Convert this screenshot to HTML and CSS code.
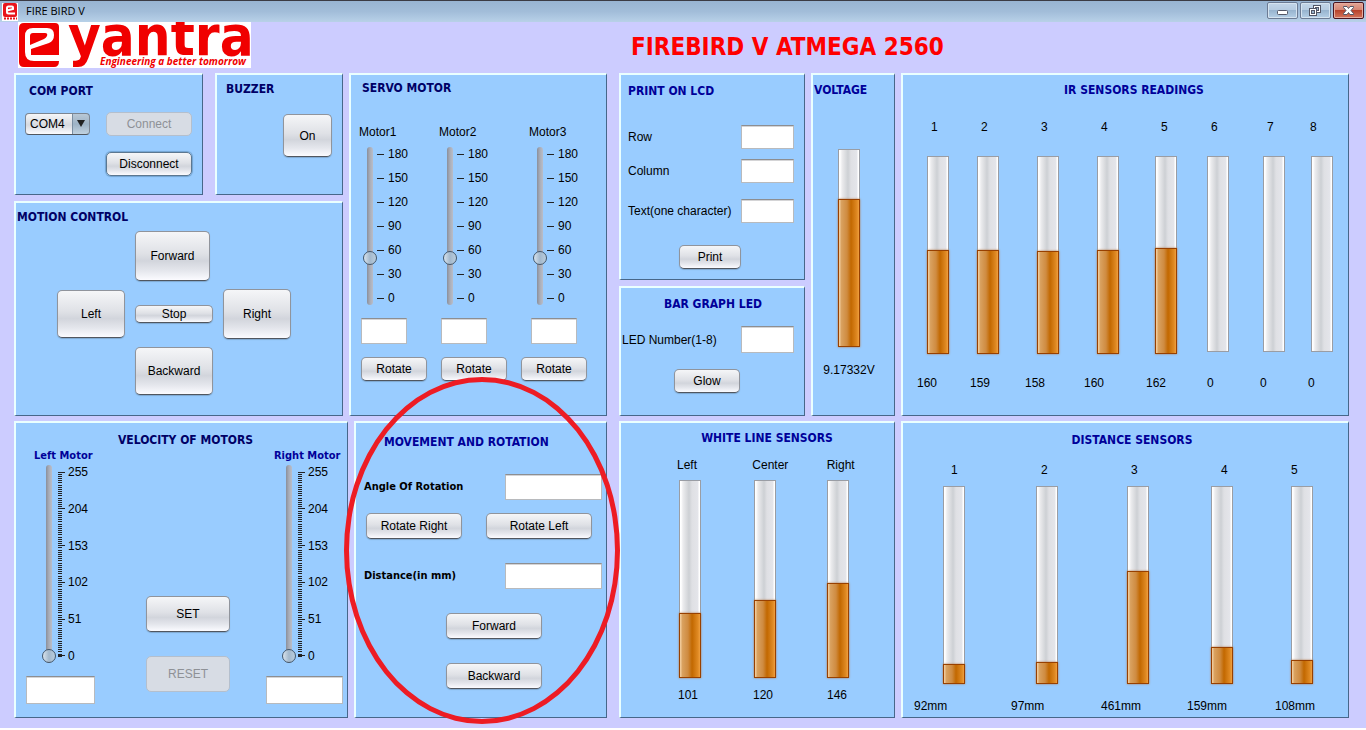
FILE: index.html
```html
<!DOCTYPE html>
<html lang="en">
<head>
<meta charset="utf-8">
<title>FIRE BIRD V</title>
<link rel="stylesheet" href="styles.css">
</head>
<body>
<div class="window">
  <div class="titlebar">
    <svg class="app-icon" width="16" height="18" viewBox="0 0 16 18" aria-hidden="true">
      <rect width="16" height="18" fill="#fff"/>
      <rect x="1" y="0" width="14" height="14" rx="2" fill="#e8141c"/>
      <path d="M5 7.500L11 6V4.500Q11 3.500 10 3.500H6.500Q5 3.500 5 5V9Q5 10.500 6.500 10.500H13" fill="none" stroke="#fff" stroke-width="2"/>
      <path d="M2 15.500H15" stroke="#e8141c" stroke-width="2" stroke-dasharray="2 1"/>
    </svg>
    <span class="titlebar-text">FIRE BIRD V</span>
    <div class="window-buttons">
      <button class="win-btn" type="button" aria-label="Minimize">
        <svg width="29" height="15" viewBox="0 0 29 15"><rect x="9.500" y="7.500" width="10" height="4" rx="1" fill="#fff" stroke="#535666"/></svg>
      </button>
      <button class="win-btn" type="button" aria-label="Restore">
        <svg width="29" height="15" viewBox="0 0 29 15"><rect x="12.500" y="2.500" width="7" height="7" fill="#fff" stroke="#535666"/><rect x="14.500" y="4.500" width="3" height="3" fill="#9ab4cc" stroke="#535666"/><rect x="8.500" y="5.500" width="7" height="7" fill="#fff" stroke="#535666"/><rect x="10.500" y="7.500" width="3" height="3" fill="#9ab4cc" stroke="#535666"/></svg>
      </button>
      <button class="win-btn win-close" type="button" aria-label="Close">
        <svg width="29" height="15" viewBox="0 0 29 15"><path d="M9.500 3.500H13L14.500 5.500L16 3.500H19.500V4.500L17 7.500L19.500 10.500V11.500H16L14.500 9.500L13 11.500H9.500V10.500L12 7.500L9.500 4.500Z" fill="#fff" stroke="#535666"/></svg>
      </button>
    </div>
  </div>

  <header class="header">
    <svg class="logo" width="233" height="46" viewBox="0 0 233 46" role="img" aria-label="e-yantra, Engineering a better tomorrow">
      <rect width="233" height="46" fill="#fff"/>
      <path d="M6 1H37Q41 1 41 5V33H13V27L31 21Q36 19 36 13Q36 6 29 6H15Q7 6 7 14V30Q7 39 16 39H41Q41 45 36 45H6Q1 45 1 40V6Q1 1 6 1Z" fill="#f00000"/>
      <path d="M15 11H27Q30 11 29 14Q28 16 26 17L12 23V14Q12 11 15 11Z" fill="#f00000"/>
      <text class="logo-word" x="50" y="33">yantra</text>
      <text class="logo-tag" x="82" y="43">Engineering a better tomorrow</text>
    </svg>
    <h1 class="title">FIREBIRD V ATMEGA 2560</h1>
  </header>

  <main class="board">
    <div class="side">
      <div class="row row-top side-top">
        <div class="col">
          <div class="row row-ports">
            <section class="panel com">
              <h2 class="dark">COM PORT</h2>
              <div class="com-grid">
                <div class="combo">
                  <select aria-label="COM port"><option>COM4</option></select>
                  <svg width="8" height="7" viewBox="0 0 8 7" aria-hidden="true"><path d="M0 0H8L4 7Z" fill="#222"/></svg>
                </div>
                <button class="btn" type="button" disabled>Connect</button>
                <button class="btn focused" type="button">Disconnect</button>
              </div>
            </section>
            <section class="panel buzzer">
              <h2 class="dark">BUZZER</h2>
              <button class="btn" type="button">On</button>
            </section>
          </div>
          <section class="panel motion">
            <h2 class="dark">MOTION CONTROL</h2>
            <div class="pad">
              <button class="btn fwd" type="button">Forward</button>
              <button class="btn left" type="button">Left</button>
              <button class="btn stop" type="button">Stop</button>
              <button class="btn right" type="button">Right</button>
              <button class="btn back" type="button">Backward</button>
            </div>
          </section>
        </div>
        <section class="panel servo">
          <h2 class="dark">SERVO MOTOR</h2>
          <div class="servo-grid">
            <div class="servo-col">
              <label for="m1">Motor1</label>
              <div class="slider"><input id="m1" type="range" min="0" max="180" value="50"><ul class="scale"><li>180</li><li>150</li><li>120</li><li>90</li><li>60</li><li>30</li><li>0</li></ul></div>
              <input class="field" type="text" aria-label="Motor1 angle">
            </div>
            <div class="servo-col">
              <label for="m2">Motor2</label>
              <div class="slider"><input id="m2" type="range" min="0" max="180" value="50"><ul class="scale"><li>180</li><li>150</li><li>120</li><li>90</li><li>60</li><li>30</li><li>0</li></ul></div>
              <input class="field" type="text" aria-label="Motor2 angle">
            </div>
            <div class="servo-col">
              <label for="m3">Motor3</label>
              <div class="slider"><input id="m3" type="range" min="0" max="180" value="50"><ul class="scale"><li>180</li><li>150</li><li>120</li><li>90</li><li>60</li><li>30</li><li>0</li></ul></div>
              <input class="field" type="text" aria-label="Motor3 angle">
            </div>
          </div>
          <div class="servo-buttons">
            <button class="btn" type="button">Rotate</button>
            <button class="btn" type="button">Rotate</button>
            <button class="btn" type="button">Rotate</button>
          </div>
        </section>
      </div>

      <div class="row row-bottom side-bottom">
        <section class="panel velocity">
          <h2 class="dark">VELOCITY OF MOTORS</h2>
          <div class="velocity-grid">
            <div class="velocity-col">
              <label for="vl">Left Motor</label>
              <div class="slider tall"><input id="vl" type="range" min="0" max="255" value="0"><svg class="ticks" width="4" height="185" viewBox="0 0 4 185" aria-hidden="true"><path d="M2 0V185" stroke="#222" stroke-width="4" stroke-dasharray="1 1 1 1 1 1 1 1 1 1 1 2"/></svg><ul class="scale"><li>255</li><li>204</li><li>153</li><li>102</li><li>51</li><li>0</li></ul></div>
              <input class="field" type="text" aria-label="Left motor velocity">
            </div>
            <div class="velocity-actions">
              <button class="btn" type="button">SET</button>
              <button class="btn" type="button" disabled>RESET</button>
            </div>
            <div class="velocity-col">
              <label for="vr">Right Motor</label>
              <div class="slider tall"><input id="vr" type="range" min="0" max="255" value="0"><svg class="ticks" width="4" height="185" viewBox="0 0 4 185" aria-hidden="true"><path d="M2 0V185" stroke="#222" stroke-width="4" stroke-dasharray="1 1 1 1 1 1 1 1 1 1 1 2"/></svg><ul class="scale"><li>255</li><li>204</li><li>153</li><li>102</li><li>51</li><li>0</li></ul></div>
              <input class="field wide" type="text" aria-label="Right motor velocity">
            </div>
          </div>
        </section>
        <section class="panel movement">
          <h2>MOVEMENT AND ROTATION</h2>
          <div class="line"><label for="angle">Angle Of Rotation</label><input class="field" id="angle" type="text"></div>
          <div class="turns"><button class="btn" type="button">Rotate Right</button><button class="btn turn-left" type="button">Rotate Left</button></div>
          <div class="line"><label for="dist">Distance(in mm)</label><input class="field" id="dist" type="text"></div>
          <div class="drive"><button class="btn" type="button">Forward</button><button class="btn" type="button">Backward</button></div>
          <div class="highlight"></div>
        </section>
      </div>
    </div>

    <div class="middle">
      <div class="row row-top middle-top">
        <div class="col">
          <section class="panel lcd">
            <h2>PRINT ON LCD</h2>
            <div class="line"><label for="lrow">Row</label><input class="field" id="lrow" type="text"></div>
            <div class="line"><label for="lcol">Column</label><input class="field" id="lcol" type="text"></div>
            <div class="line"><label for="ltext">Text(one character)</label><input class="field" id="ltext" type="text"></div>
            <button class="btn" type="button">Print</button>
          </section>
          <section class="panel led">
            <h2>BAR GRAPH LED</h2>
            <div class="line"><label for="led">LED Number(1-8)</label><input class="field" id="led" type="text"></div>
            <button class="btn" type="button">Glow</button>
          </section>
        </div>
        <section class="panel voltage">
          <h2>VOLTAGE</h2>
          <div class="voltage-body">
            <div class="bar"><div class="fill" style="height:76.3%"></div></div>
            <span>9.17332V</span>
          </div>
        </section>
      </div>
      <section class="panel white row-bottom">
        <h2>WHITE LINE SENSORS</h2>
        <div class="names"><span>Left</span><span>Center</span><span>Right</span></div>
        <div class="bars">
          <div class="bar"><div class="fill" style="height:33.5%"></div></div>
          <div class="bar"><div class="fill" style="height:40.2%"></div></div>
          <div class="bar"><div class="fill" style="height:49%"></div></div>
        </div>
        <div class="values"><span>101</span><span>120</span><span>146</span></div>
      </section>
    </div>

    <div class="sensors">
      <section class="panel ir row-top">
        <h2>IR SENSORS READINGS</h2>
        <div class="names"><span>1</span><span>2</span><span>3</span><span>4</span><span>5</span><span>6</span><span>7</span><span>8</span></div>
        <div class="bars">
          <div class="bar"><div class="fill" style="height:53.6%"></div></div>
          <div class="bar"><div class="fill" style="height:53.6%"></div></div>
          <div class="bar"><div class="fill" style="height:53.1%"></div></div>
          <div class="bar"><div class="fill" style="height:53.6%"></div></div>
          <div class="bar"><div class="fill" style="height:54.6%"></div></div>
          <div class="bar"></div>
          <div class="bar"></div>
          <div class="bar"></div>
        </div>
        <div class="values"><span>160</span><span>159</span><span>158</span><span>160</span><span>162</span><span>0</span><span>0</span><span>0</span></div>
      </section>
      <section class="panel distance row-bottom">
        <h2>DISTANCE SENSORS</h2>
        <div class="names"><span>1</span><span>2</span><span>3</span><span>4</span><span>5</span></div>
        <div class="bars">
          <div class="bar"><div class="fill" style="height:10.3%"></div></div>
          <div class="bar"><div class="fill" style="height:11.3%"></div></div>
          <div class="bar"><div class="fill" style="height:58.2%"></div></div>
          <div class="bar"><div class="fill" style="height:19.1%"></div></div>
          <div class="bar"><div class="fill" style="height:12.4%"></div></div>
        </div>
        <div class="values"><span>92mm</span><span>97mm</span><span>461mm</span><span>159mm</span><span>108mm</span></div>
      </section>
    </div>
  </main>
</div>
</body>
</html>
```

FILE: styles.css
```css
* { box-sizing: border-box; }

body {
  margin: 0;
  background: #fff;
  color: #000;
  font: 12px/16px "Liberation Sans", Arial, sans-serif;
}

.window {
  background: #ccccff;
  padding-bottom: 10px;
}

/* Title bar */
.titlebar {
  display: flex;
  align-items: center;
  height: 22px;
  padding: 0 2px;
  border-top: 1px solid #3b3b44;
  background: linear-gradient(#98b4d2, #a2bdd9 50%, #b8d1e8);
}
.app-icon { flex: none; }
.titlebar-text {
  margin-left: 8px;
  padding-bottom: 2px;
  font: 11px/16px "Open Sans", sans-serif;
}
.window-buttons {
  display: flex;
  gap: 2px;
  margin-left: auto;
  align-self: flex-start;
  padding-top: 1px;
}
.win-btn {
  width: 31px;
  height: 17px;
  padding: 0;
  border: 1px solid #6c7b94;
  border-radius: 2px;
  background: linear-gradient(#c3d5e8, #b4cae0 50%, #98b4cf 50%, #b5cfe6);
  box-shadow: inset 0 0 0 1px #d5e3f0;
}
.win-btn svg { display: block; }
.win-close {
  border-color: #4a1420;
  background: linear-gradient(#e3a596, #d68674 45%, #b8432c 50%, #d3755c);
  box-shadow: inset 0 0 0 1px #e5ac9f;
}

/* Header */
.header {
  display: grid;
  grid-template-columns: 613fr 735fr;
  height: 51px;
  padding-left: 18px;
}
.logo { display: block; }
.logo-word {
  fill: #f00000;
  font: bold 56px "DejaVu Sans Condensed", "DejaVu Sans", sans-serif;
}
.logo-tag {
  fill: #f00000;
  font: italic bold 10px "Open Sans", sans-serif;
}
.title {
  margin: 0;
  padding-top: 9px;
  color: #ff0000;
  font: bold 24px/32px "DejaVu Sans Condensed", Tahoma, sans-serif;
  white-space: nowrap;
}

/* Board */
.board {
  display: flex;
  padding: 0 17px 0 14px;
}
.side, .middle, .sensors, .col {
  display: flex;
  flex-direction: column;
  min-width: 0;
}
.side { flex: 593 1 0; gap: 5px; margin-right: 12px; }
.middle { flex: 276 1 0; gap: 5px; margin-right: 6px; }
.sensors { flex: 448 1 0; gap: 5px; }
.row { display: grid; gap: 6px; }
.row-top { min-height: 343px; }
.row-bottom { min-height: 297px; }
.side-top { grid-template-columns: 329fr 258fr; }
.side-bottom { grid-template-columns: 334fr 253fr; }
.middle-top { grid-template-columns: 186fr 84fr; }
.row-ports { grid-template-columns: 189fr 128fr; gap: 12px; min-height: 122px; }
.col { gap: 6px; }

.panel {
  position: relative;
  min-width: 0;
  background: #99ccff;
  border: solid;
  border-width: 2px 1px 1px 2px;
  border-color: #eaffff #47678a #47678a #eaffff;
}
h2 {
  margin: 0;
  color: #000099;
  font: bold 12px/16px "DejaVu Sans Condensed", Tahoma, sans-serif;
  white-space: nowrap;
}
h2.dark { color: #000066; }

/* Controls */
.btn {
  height: 24px;
  padding: 0;
  border: 1px solid #90949c;
  border-bottom-color: #50565f;
  border-radius: 5px;
  background: linear-gradient(#f5f6f8, #dfe1e6 45%, #d2d5dc 60%, #e4e6ec 80%, #fbfbff);
  box-shadow: 0 1px 1px #7fa8d0;
  color: #000;
  font: 12px/16px "Liberation Sans", Arial, sans-serif;
}
.btn:disabled {
  border-color: #b4bfcd;
  background: #d7dce4;
  box-shadow: none;
  color: #8e9196;
}
.btn.focused {
  border-color: #5c7790;
  box-shadow: 0 0 1px 1px #73a4d1;
}
.field {
  width: 53px;
  height: 24px;
  padding: 0 4px;
  border: 1px solid #b8babd;
  border-top-color: #8d8e91;
  border-radius: 0;
  background: #fff;
  box-shadow: inset 0 1px 0 #d4d4d6;
  font: 12px/16px "Liberation Sans", Arial, sans-serif;
}
.line {
  display: flex;
  align-items: center;
  justify-content: space-between;
}

/* COM port */
.com { padding: 8px 0 0 9px; }
.com h2 { padding-left: 4px; }
.com-grid {
  display: grid;
  grid-template-columns: 65px 86px;
  gap: 16px;
  align-items: center;
  margin-top: 13px;
}
.com-grid .focused { grid-column: 2; }
.combo { position: relative; }
.combo select {
  display: block;
  width: 100%;
  height: 22px;
  padding: 0 4px;
  appearance: none;
  border: 1px solid #7b8592;
  border-bottom-color: #50565f;
  border-radius: 4px;
  background:
    linear-gradient(#7a8ea2, #7a8ea2) right 16px top / 1px 100% no-repeat,
    linear-gradient(#b9c8d6, #9db2c5 50%, #c1d2e0) right top / 16px 100% no-repeat,
    linear-gradient(#f5f6f8, #d6d9df 55%, #fbfbff);
  color: #000;
  font: 12px/16px "Liberation Sans", Arial, sans-serif;
}
.combo svg { position: absolute; right: 5px; top: 7px; pointer-events: none; }

/* Buzzer */
.buzzer {
  display: flex;
  flex-direction: column;
  padding: 6px 10px 0 9px;
}
.buzzer .btn { align-self: flex-end; width: 49px; height: 43px; margin-top: 17px; }

/* Motion control */
.motion { flex: 1; padding: 6px 0 0 1px; }
.pad {
  display: grid;
  grid-template-columns: 68px 78px 68px;
  grid-template-areas: ". fwd ." "left stop right" ". back .";
  gap: 8px 10px;
  align-items: center;
  margin: 6px 0 0 40px;
}
.pad .btn { height: 50px; }
.pad .fwd { grid-area: fwd; width: 75px; }
.pad .left { grid-area: left; height: 48px; }
.pad .stop { grid-area: stop; height: 18px; }
.pad .right { grid-area: right; }
.pad .back { grid-area: back; height: 48px; }

/* Sliders */
.slider { display: flex; align-items: center; height: 160px; }
.slider.tall { height: 200px; }
.slider input {
  flex: none;
  width: 14px;
  height: 158px;
  margin: 0;
  appearance: none;
  background: transparent;
  writing-mode: vertical-lr;
  direction: rtl;
}
.slider.tall input { height: 198px; }
.slider input::-webkit-slider-runnable-track {
  width: 6px;
  height: 100%;
  border-radius: 3px;
  background: linear-gradient(to right, #8b8f9b, #a9adb8 50%, #b9bdc9);
}
.slider input::-webkit-slider-thumb {
  appearance: none;
  width: 14px;
  height: 14px;
  margin-left: -4px;
  border: 1px solid #42566b;
  border-radius: 50%;
  background: linear-gradient(to right, #d9e3ec, #a3b8cc 50%, #b9cddd);
}
.scale {
  display: flex;
  flex-direction: column;
  justify-content: space-between;
  height: 100%;
  margin: 0;
  padding: 0;
  list-style: none;
}
.scale li { display: flex; align-items: center; gap: 4px; }
.scale li::before { content: ""; width: 7px; height: 1px; background: #222; }
.tall .scale { margin-left: -4px; }
.tall .scale li { gap: 3px; }
.ticks { flex: none; margin-left: 2px; }

/* Servo */
.servo { padding-top: 5px; }
.servo h2 { padding-left: 11px; }
.servo-grid {
  display: grid;
  grid-template-columns: 80fr 90fr 77fr;
  margin-top: 28px;
  padding-left: 8px;
}
.servo-col { display: flex; flex-direction: column; }
.servo-col .slider { margin: 6px 0 0 4px; }
.servo-col .field { width: 46px; height: 26px; margin: 12px 0 0 2px; }
.servo-buttons {
  display: grid;
  grid-template-columns: 80fr 80fr 85fr;
  margin-top: 13px;
  padding-left: 10px;
}
.servo-buttons .btn { width: 66px; }

/* Velocity */
.velocity { padding-top: 9px; }
.velocity h2 { padding-left: 8px; text-align: center; }
.velocity-grid {
  display: grid;
  grid-template-columns: 120fr 120fr 81fr;
  padding-left: 10px;
}
.velocity-col { display: flex; flex-direction: column; }
.velocity-col label {
  padding-left: 8px;
  color: #000099;
  font: bold 11px/16px "DejaVu Sans Condensed", Tahoma, sans-serif;
  white-space: nowrap;
}
.velocity-col .slider { margin-left: 16px; }
.velocity-col .field { width: 69px; height: 28px; margin-top: 12px; }
.velocity-col .wide { width: 77px; }
.velocity-actions {
  display: flex;
  flex-direction: column;
  justify-content: flex-end;
  gap: 24px;
  padding-bottom: 12px;
}
.velocity-actions .btn { width: 84px; height: 36px; }

/* Movement */
.movement { padding: 11px 4px 0 8px; }
.movement h2 { padding-left: 20px; }
.movement .line { margin-top: 24px; }
.movement label { font: bold 11px/16px "DejaVu Sans Condensed", Tahoma, sans-serif; }
.movement .field { width: 97px; height: 26px; }
.movement .btn { width: 96px; height: 26px; }
.turns { display: flex; gap: 24px; margin-top: 13px; padding-left: 2px; }
.movement .turn-left { width: 106px; }
.drive {
  display: flex;
  flex-direction: column;
  gap: 24px;
  margin-top: 24px;
  padding-left: 82px;
}
.highlight {
  position: absolute;
  inset: -46px -14px -7px -12px;
  z-index: 2;
  border: 5px solid #ed1c24;
  border-radius: 50%;
  pointer-events: none;
}

/* LCD and LED */
.lcd, .led { display: flex; flex-direction: column; }
.lcd { min-height: 207px; padding: 8px 10px 0 7px; }
.lcd .line { margin-top: 10px; }
.lcd h2 + .line { margin-top: 26px; }
.lcd .line:nth-of-type(3) { margin-top: 16px; }
.lcd .btn { width: 62px; margin: 22px 0 0 51px; }
.led { flex: 1; padding: 8px 10px 0 1px; }
.led h2 { padding-left: 10px; text-align: center; }
.led .line { margin-top: 14px; }
.led .field { height: 27px; }
.led .btn { width: 66px; margin: 16px 0 0 52px; }

/* Level bars */
.bar {
  position: relative;
  width: 22px;
  height: 196px;
  border: 1px solid #9a9da4;
  background: linear-gradient(to right, #fff 0 1px, #ececee 3px, #cdd0d4 45%, #dfe0e4 60%, #e4e5ea 90%, #fff 95%);
}
.fill {
  position: absolute;
  right: -1px;
  bottom: -3px;
  left: -1px;
  border: 1px solid #984000;
  background: linear-gradient(to right, #f0c896 0 1px, #daa362 2px, #cf8b40 40%, #c26800 60%, #e08a24 90%, #f0a040);
  box-shadow: 0 0 2px #b07848;
}
.names, .bars, .values { display: grid; }

/* Voltage */
.voltage { padding: 7px 0 0 1px; }
.voltage-body {
  display: flex;
  flex-direction: column;
  align-items: center;
  gap: 17px;
  margin-top: 51px;
  padding-right: 10px;
}

/* White line */
.white { padding-top: 7px; }
.white h2 { padding-left: 19px; text-align: center; }
.white .names, .white .bars, .white .values { grid-template-columns: 75fr 74fr 67fr; }
.white .names { margin-top: 11px; padding-left: 56px; }
.white .bars { margin-top: 7px; padding-left: 58px; }
.white .values { margin-top: 11px; padding-left: 57px; }

/* IR */
.ir { padding-top: 7px; }
.ir h2 { padding-left: 17px; text-align: center; }
.ir .names { grid-template-columns: 50fr 60fr 60fr 60fr 50fr 56fr 43fr 38fr; margin-top: 21px; padding-left: 28px; }
.ir .bars { grid-template-columns: 50fr 60fr 60fr 58fr 52fr 56fr 48fr 37fr; margin-top: 21px; padding-left: 24px; }
.ir .values { grid-template-columns: 53fr 55fr 59fr 62fr 61fr 53fr 48fr 40fr; margin-top: 23px; padding-left: 14px; }

/* Distance */
.distance { padding-top: 9px; }
.distance h2 { padding-left: 13px; text-align: center; }
.distance .names { grid-template-columns: 90fr 90fr 90fr 70fr 57fr; margin-top: 14px; padding-left: 48px; }
.distance .bars { grid-template-columns: 93fr 91fr 84fr 80fr 57fr; margin-top: 8px; padding-left: 40px; }
.distance .values { grid-template-columns: 97fr 90fr 86fr 88fr 73fr; margin-top: 16px; padding-left: 11px; }
```
